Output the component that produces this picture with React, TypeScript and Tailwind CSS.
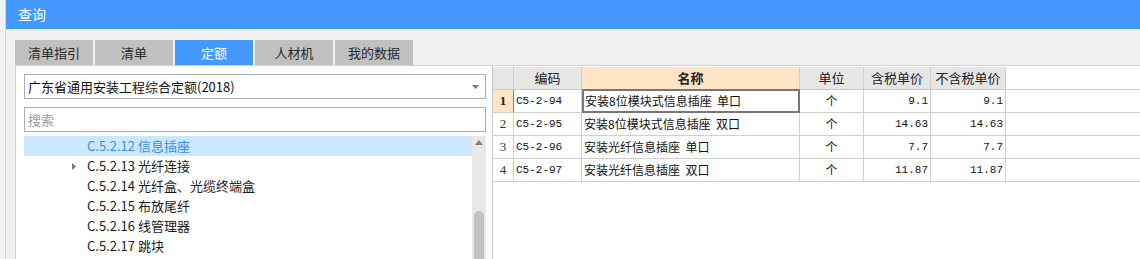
import React from 'react';

const tabs = ['清单指引', '清单', '定额', '人材机', '我的数据'];

const tree = [
  { code: 'C.5.2.12', name: '信息插座', selected: true },
  { code: 'C.5.2.13', name: '光纤连接', expandable: true },
  { code: 'C.5.2.14', name: '光纤盒、光缆终端盒' },
  { code: 'C.5.2.15', name: '布放尾纤' },
  { code: 'C.5.2.16', name: '线管理器' },
  { code: 'C.5.2.17', name: '跳块' },
];

const rows = [
  { code: 'C5-2-94', name: '安装8位模块式信息插座  单口', unit: '个', tax: '9.1', notax: '9.1' },
  { code: 'C5-2-95', name: '安装8位模块式信息插座  双口', unit: '个', tax: '14.63', notax: '14.63' },
  { code: 'C5-2-96', name: '安装光纤信息插座  单口', unit: '个', tax: '7.7', notax: '7.7' },
  { code: 'C5-2-97', name: '安装光纤信息插座  双口', unit: '个', tax: '11.87', notax: '11.87' },
];

const cjk = "font-['Noto_Sans_CJK_SC',sans-serif]";

export default function App() {
  return (
    <div className={`flex w-[1140px] h-[259px] overflow-hidden bg-[#f0f0f0] ${cjk}`}>
      {/* window frame strip */}
      <div className="w-[6px] shrink-0 bg-[#f3f3f3] border-r border-[#d4d4d4]" />

      <div className="flex flex-col flex-1 min-w-0">
        {/* title bar */}
        <div className="h-[29px] shrink-0 bg-[#4499ff] flex items-center pl-[12px] text-white text-[14px]">
          查询
        </div>

        {/* tabs */}
        <div className="h-[36px] shrink-0 flex items-end pl-[9px] gap-[2px]">
          {tabs.map(t => (
            <div
              key={t}
              className={`w-[78px] h-[25px] flex items-center justify-center text-[13px] ${t === '定额' ? 'bg-[#4499ff] text-white' : 'bg-[#c0c0c0] text-[#2a2a2a]'}`}
            >
              {t}
            </div>
          ))}
        </div>

        {/* content panel */}
        <div className="flex flex-1 ml-[9px] bg-white border-l border-t border-[#d2d2d2] min-h-0">
          {/* left panel */}
          <div className="w-[477px] shrink-0 flex flex-col pl-[8px] pr-[6px] pt-[8px] border-r border-[#c8c8c8]">
            <div className="h-[25px] shrink-0 border border-[#adadad] flex items-center pl-[3px] pr-[6px] text-[13px] text-[#111]">
              <span className="flex-1">广东省通用安装工程综合定额(2018)</span>
              <svg width="7" height="4" viewBox="0 0 7 4"><path d="M0 0h7L3.5 4z" fill="#7a7a7a" /></svg>
            </div>
            <div className="h-[25px] shrink-0 mt-[8px] border border-[#adadad] flex items-center pl-[3px] text-[13px] text-[#9a9a9a]">
              搜索
            </div>
            <div className="flex flex-1 mt-[4px] min-h-0">
              <div className="flex-1 flex flex-col">
                {tree.map(n => (
                  <div
                    key={n.code}
                    className={`h-[20px] shrink-0 flex items-center text-[13px] ${n.selected ? 'bg-[#cce8ff] text-[#3a8ee6]' : 'text-[#1a1a1a]'}`}
                  >
                    <div className="w-[63px] shrink-0 flex justify-end pr-[11px]">
                      {n.expandable && (
                        <svg width="4" height="7" viewBox="0 0 4 7"><path d="M0 0l4 3.5L0 7z" fill="#7a7a7a" /></svg>
                      )}
                    </div>
                    <span>{n.code} {n.name}</span>
                  </div>
                ))}
              </div>
              <div className="w-[14px] shrink-0 bg-[#e8e8e8] flex flex-col items-center">
                <svg className="mt-[4px]" width="8" height="5" viewBox="0 0 8 5"><path d="M0 5h8L4 0z" fill="#808080" /></svg>
                <div className="w-[10px] flex-1 mt-[66px] bg-[#c1c1c1] rounded-t-full" />
              </div>
            </div>
          </div>

          {/* right table */}
          <div className="flex-1 pt-[1px] text-[12px]">
            <div className="flex h-[23px] border-b border-[#c8c8c8]">
              <div className="w-[21px] bg-[#e6e6e6] border-r border-[#cfcfcf]" />
              <div className="w-[68px] bg-[#e6e6e6] border-r border-[#cfcfcf] flex items-center justify-center text-[13px] text-[#222]">编码</div>
              <div className="w-[218px] bg-[#ffe4c6] border-r border-[#cfcfcf] flex items-center justify-center text-[13px] font-bold text-[#222]">名称</div>
              <div className="w-[64px] bg-[#e6e6e6] border-r border-[#cfcfcf] flex items-center justify-center text-[13px] text-[#222]">单位</div>
              <div className="w-[67px] bg-[#e6e6e6] border-r border-[#cfcfcf] flex items-center justify-center text-[13px] text-[#222]">含税单价</div>
              <div className="w-[75px] bg-[#e6e6e6] border-r border-[#cfcfcf] flex items-center justify-center text-[13px] text-[#222]">不含税单价</div>
            </div>
            {rows.map((r, i) => (
              <div key={r.code} className="flex h-[23px] border-b border-[#d0d0d0]">
                <div className={`w-[21px] border-r border-[#cfcfcf] flex items-center justify-center font-['Liberation_Serif',serif] text-[13px] ${i === 0 ? 'bg-[#ffe4c6] font-bold text-[#222] border-r-[#3d8fe8]' : 'bg-white text-[#333]'}`}>
                  {i + 1}
                </div>
                <div className="w-[68px] border-r border-[#d0d0d0] flex items-center pl-[2px] font-['Liberation_Mono',monospace] text-[11px] text-[#111]">
                  {r.code}
                </div>
                <div className={`w-[218px] flex items-center text-[12px] text-[#111] whitespace-pre ${i === 0 ? 'border-2 border-[#777] -mt-[1px] h-[24px] pl-[1px]' : 'border-r border-[#d0d0d0] pl-[2px]'}`}>
                  {r.name}
                </div>
                <div className="w-[64px] border-r border-[#d0d0d0] flex items-center justify-center text-[12px] text-[#111]">{r.unit}</div>
                <div className="w-[67px] border-r border-[#d0d0d0] flex items-center justify-end pr-[2px] font-['Liberation_Mono',monospace] text-[11px] text-[#111]">{r.tax}</div>
                <div className="w-[75px] border-r border-[#d0d0d0] flex items-center justify-end pr-[2px] font-['Liberation_Mono',monospace] text-[11px] text-[#111]">{r.notax}</div>
              </div>
            ))}
          </div>
        </div>
      </div>
    </div>
  );
}
